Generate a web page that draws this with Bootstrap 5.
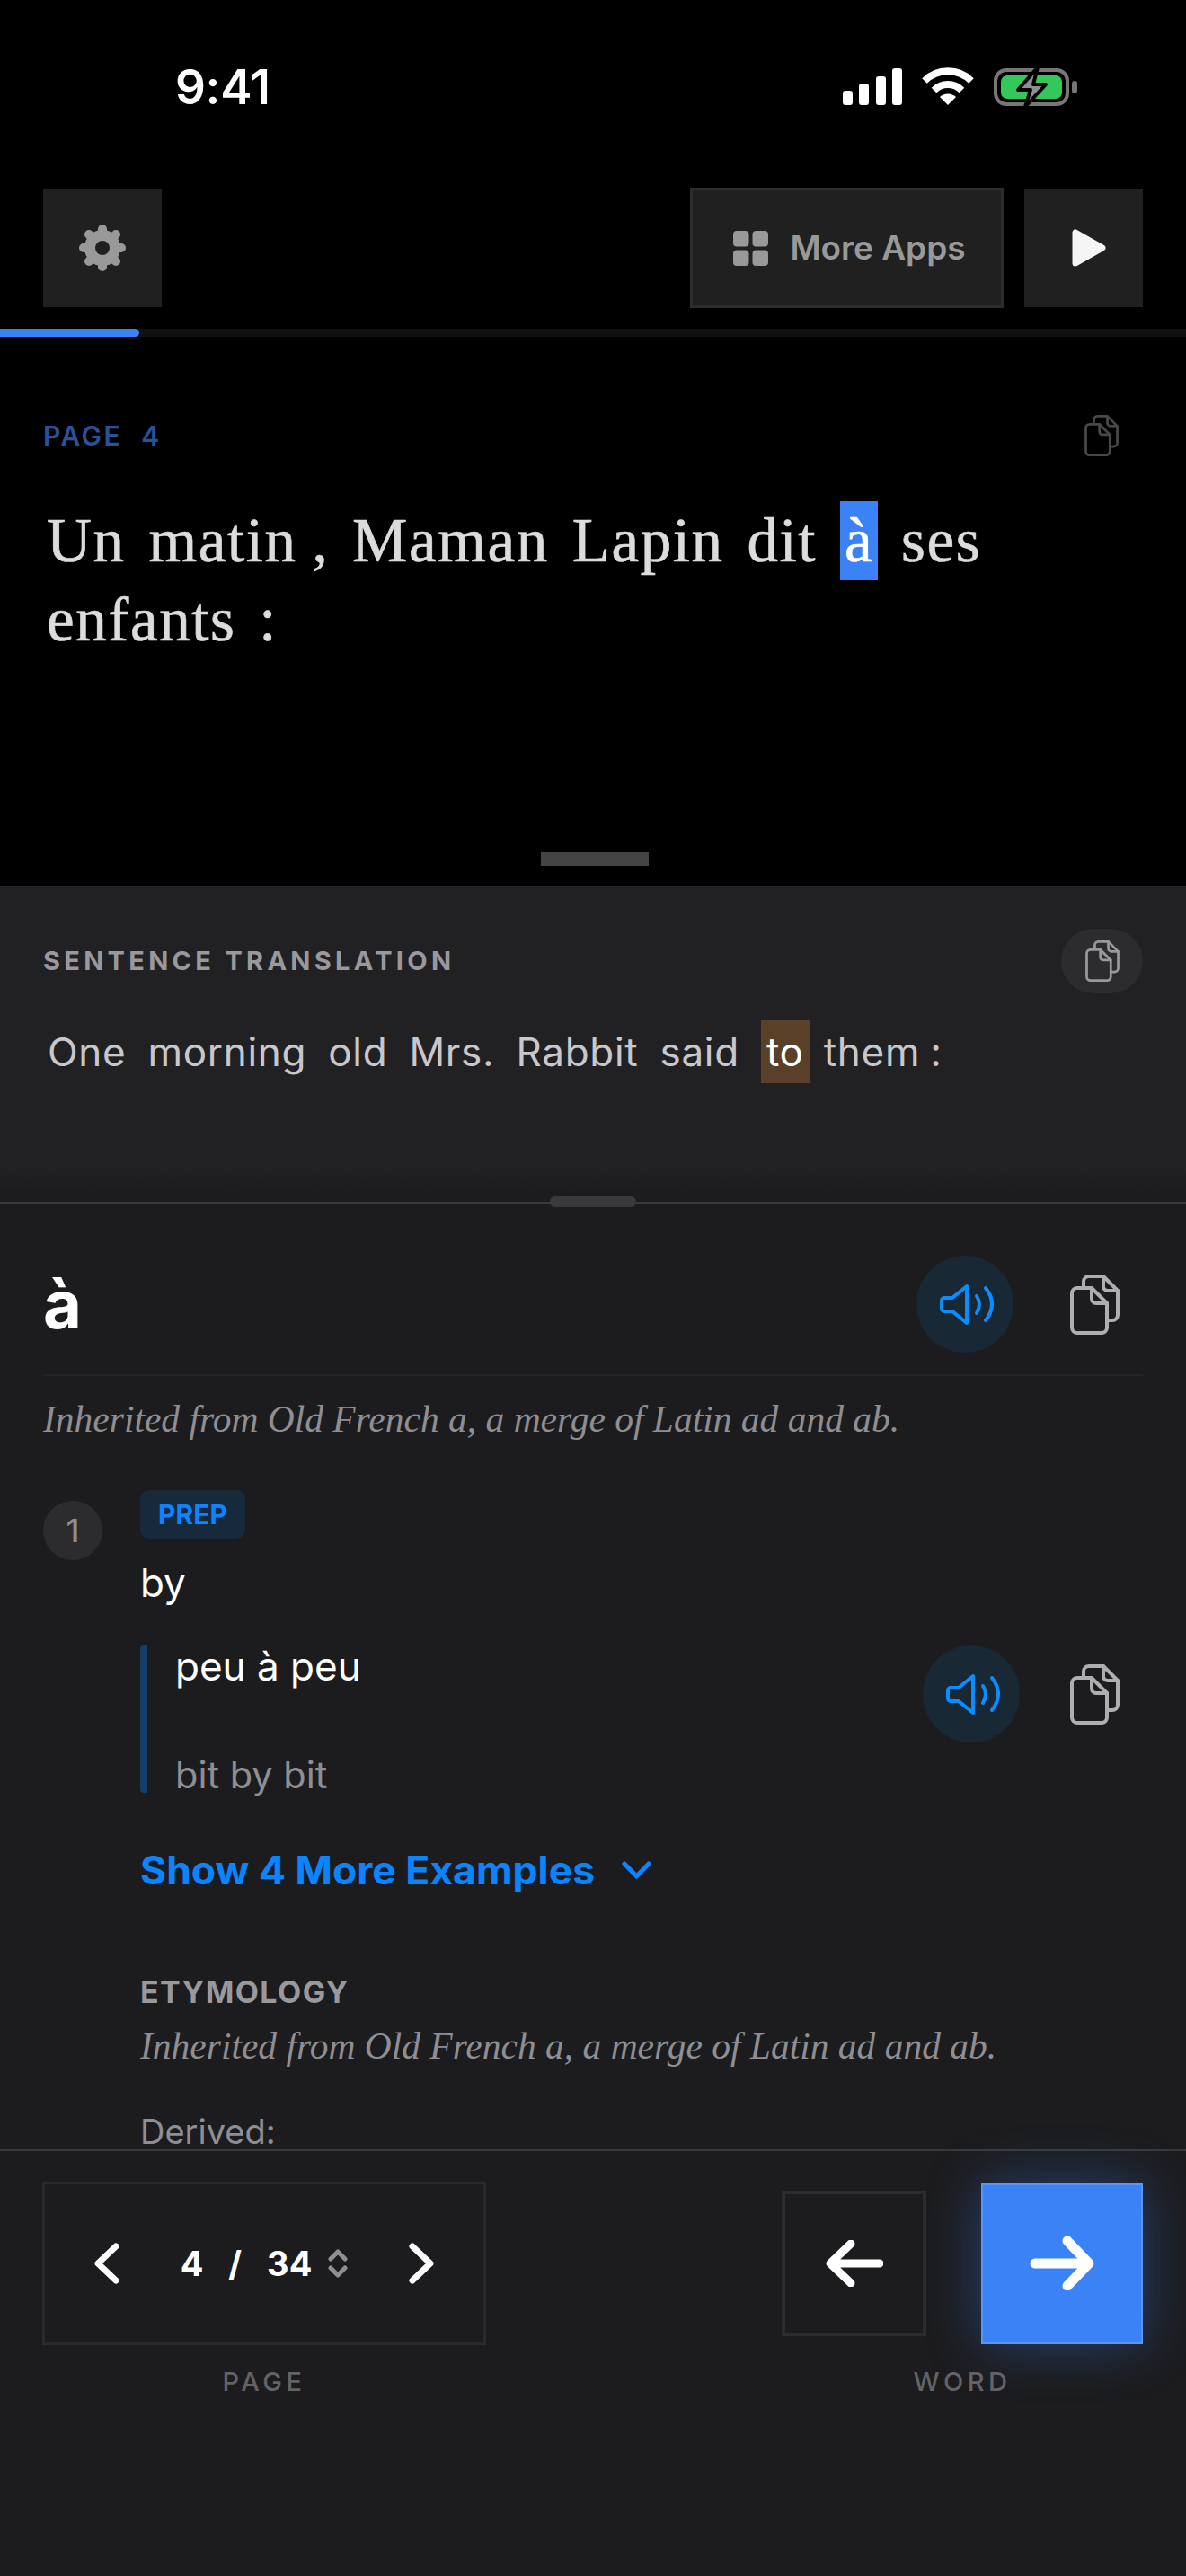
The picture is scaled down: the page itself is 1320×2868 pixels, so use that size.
<!DOCTYPE html>
<html lang="en">
<head>
<meta charset="utf-8">
<title>Reader</title>
<link href="https://cdn.jsdelivr.net/npm/bootstrap@5.3.0/dist/css/bootstrap.min.css" rel="stylesheet">
<style>
html,body{margin:0;background:#000}
body{font-family:Inter,"Liberation Sans",sans-serif;color:#fff}
.screen{width:1320px;height:2868px;overflow:hidden;background:#000}
.status-row{height:210px;padding:0 120px 0 195px}
.clock{font-size:53px;font-weight:600;line-height:64px;margin-top:65px;letter-spacing:-.3px}
.status-icons{margin-top:75px;gap:22px}
.tool-row{padding:0 48px;gap:23px;height:132px}
.tool-btn{border-radius:0;background:#202020;border:0;padding:0;height:132px;width:132px;color:#999}
.play-btn{padding-left:12px}
.apps-btn{width:349px;height:134px;margin-top:-1px;border:3px solid #2d2d2d;background:#202020;color:#999;font-size:37px;font-weight:600;gap:24px;border-radius:0;padding:0 0 0 6px}
.prog{height:9px;margin-top:24px;background:#111}
.prog-fill{width:155px;height:9px;background:#3b82f6;border-radius:0 5px 5px 0}
.reader{height:611px;padding:87px 48px 0 52px}
.page-tag{font-size:30px;font-weight:600;letter-spacing:2.5px;word-spacing:11px;color:#2a5298;margin-left:-4px}
.page-copy{margin-right:27px}
.read-text{font-family:"Liberation Serif",serif;font-size:69px;line-height:88px;letter-spacing:1.6px;color:#dcdcdc;-webkit-text-stroke:.7px #dcdcdc;word-spacing:7px;margin-top:50px;width:1100px}
.tight{word-spacing:-2px}
.word-on{display:inline-block;background:#3b82f6;color:#fff;-webkit-text-stroke:.7px #fff;padding:0 5px;height:88px}
.grab{width:120px;height:15px;background:#444;margin-top:auto;margin-bottom:22px}
.trans{height:352px;padding:46px 48px 0 48px;border-top:2px solid #29292b;background:linear-gradient(#212123 0,#212123 312px,#1c1c1e 340px)}
.sec-tag{font-size:29px;font-weight:700;letter-spacing:4.300px;color:#98989d}
.copy-pill{width:91px;height:72px;border-radius:36px;background:#2c2c2e;color:#98989d}
.trans-text{font-size:44px;line-height:70px;color:#c7c7cc;margin:30px 0 0 5px;letter-spacing:.7px;word-spacing:11px}
.word-alt{display:inline-block;background:#5a4028;color:#fff;padding:0 6px;height:70px;margin-right:-8px}
.split{height:2px;background:#3a3a3c;position:relative}
.split-grab{position:absolute;left:612px;top:-6px;width:96px;height:12px;border-radius:6px;background:#3a3a3c}
.dict{height:1053px;overflow:hidden;background:#1c1c1e;padding:58px 48px 0}
.head-row{padding-bottom:24px;border-bottom:2px solid #242426}
.head-word{font-size:74px;font-weight:700;line-height:108px}
.voice{width:108px;height:108px;border-radius:50%;background:#182835;flex:none}
.voice-ico{margin-left:3px}
.copy-slot{width:81px;flex:none;margin-left:63px;color:#aeaeb2}
.copy-big{margin-top:21px}
.it-line{font-family:"Liberation Serif",serif;font-style:italic;font-size:41.500px;line-height:56px;color:#8e8e93;white-space:nowrap}
.it-one{margin-top:20px}
.num{width:66px;height:66px;border-radius:50%;background:#2c2c2e;color:#8e8e93;font-size:36px;font-weight:500;margin-top:12px;flex:none}
.sense{margin-top:51px}
.sense-body{margin-left:42px;flex:1}
.pos{display:inline-flex;width:117px;height:54px;border-radius:10px;background:#172a3c;color:#0a84ff;font-size:30px;font-weight:700;align-items:center;justify-content:center;vertical-align:top}
.gloss{font-size:44px;line-height:60px;margin-top:19px}
.ex-row{margin-top:40px;height:164px}
.ex-main{border-left:8px solid #12406a;border-radius:4px;padding-left:31px;flex:1}
.ex-fr{font-size:44px;line-height:46px}
.ex-en{font-size:41.500px;line-height:44px;color:#8e8e93;margin-bottom:-2px}
.ex-row .copy-slot{margin-left:56px}
.more{font-size:44.500px;font-weight:700;line-height:60px;color:#0a84ff;margin-top:56px;gap:30px}
.ety{font-size:34px;font-weight:700;letter-spacing:1.400px;line-height:40px;color:#98989d;margin-top:86px}
.it-two{margin-top:12px}
.derived{font-size:38px;line-height:38px;color:#8e8e93;margin-top:48px}
.foot{height:475px;background:#1c1c1e;border-top:2px solid #3a3a3c;padding:34px 48px 0 47px}
.page-box{width:494px;height:182px;border:3px solid #2a2a2c;padding:0 55px}
.pnum{font-size:38px;font-weight:700;line-height:46px}
.slash{margin:0 28px}
.ud{margin-left:18px;color:#8e8e93}
.cap-tag{font-size:29px;font-weight:500;letter-spacing:4.500px;line-height:40px;color:#636366;margin-top:21px;text-align:center}
.word-nav{height:182px;gap:61px}
.prev-btn{width:161px;height:162px;border:4px solid #2c2c2e;background:transparent;border-radius:0;padding:0}
.next-btn{width:180px;height:179px;border:2px solid #5c95f8;background:#3b82f6;border-radius:0;padding:0;box-shadow:0 0 60px rgba(59,130,246,.38)}
</style>
</head>
<body>
<svg width="0" height="0" class="d-block" aria-hidden="true">
<symbol id="copy" viewBox="0 0 55 67"><g fill="none" stroke="currentColor" stroke-width="4" stroke-linejoin="round" stroke-linecap="round"><path d="M8 15H24L41 32V59a6 6 0 0 1-6 6H8a6 6 0 0 1-6-6V21a6 6 0 0 1 6-6Z"/><path d="M24 15V27a5 5 0 0 0 5 5H41"/><path d="M15 13V8a6 6 0 0 1 6-6H37L53 18V45a6 6 0 0 1-6 6H42"/><path d="M37 2V13a5 5 0 0 0 5 5H53"/></g></symbol>
<symbol id="voice" viewBox="0 0 60 47"><g fill="none" stroke="#0a8dff" stroke-width="4" stroke-linejoin="round" stroke-linecap="round"><path d="M30 3V44L14 31H5a3 3 0 0 1-3-3V19a3 3 0 0 1 3-3H14Z"/><path d="M41 14Q47 23 41 33"/><path d="M51 5Q65 23 51 41"/></g></symbol>
</svg>
<div class="screen d-flex flex-column">
  <div class="status-row d-flex justify-content-between align-items-start flex-none">
    <div class="clock">9:41</div>
    <div class="status-icons d-flex align-items-start">
      <svg width="66" height="42" viewBox="0 0 66 42" fill="#fff"><rect x="0" y="26" width="11" height="16" rx="3"/><rect x="18" y="18" width="11" height="24" rx="3"/><rect x="37" y="10" width="11" height="32" rx="3"/><rect x="55" y="1" width="11" height="41" rx="3"/></svg>
      <svg width="58" height="42" viewBox="0 0 58 42"><g fill="none" stroke="#fff" stroke-width="8"><path d="M3 15A37 37 0 0 1 55 15"/><path d="M13.500 25.500A22 22 0 0 1 44.500 25.500"/></g><path d="M29 42L20 33A13 13 0 0 1 38 33Z" fill="#fff"/></svg>
      <svg width="94" height="50" viewBox="0 0 94 50"><rect x="2" y="3" width="80" height="38" rx="12" fill="none" stroke="#777" stroke-width="4"/><rect x="8" y="9" width="68" height="26" rx="7" fill="#34c759"/><rect x="87" y="15" width="6" height="14" rx="3" fill="#777"/><path d="M49 0L27 25H41L35 44L58 19H44Z" fill="#8e8e8e" stroke="#000" stroke-width="4" stroke-linejoin="round"/></svg>
    </div>
  </div>
  <div class="tool-row d-flex align-items-start">
    <button class="btn tool-btn d-flex align-items-center justify-content-center" aria-label="Settings">
      <svg width="54" height="54" viewBox="-27 -27 54 54"><g stroke="#999" stroke-width="10" stroke-linecap="round"><path d="M0-15V-21M0 15V21M-15 0H-21M15 0H21M10.600-10.600L15-15M-10.600-10.600L-15-15M10.600 10.600L15 15M-10.600 10.600L-15 15"/></g><circle r="14" fill="none" stroke="#999" stroke-width="12"/></svg>
    </button>
    <button class="btn apps-btn d-flex align-items-center justify-content-center ms-auto">
      <svg width="39" height="39" viewBox="0 0 39 39" fill="#999"><rect width="17.500" height="17.500" rx="4"/><rect x="21.500" width="17.500" height="17.500" rx="4"/><rect y="21.500" width="17.500" height="17.500" rx="4"/><rect x="21.500" y="21.500" width="17.500" height="17.500" rx="4"/></svg>
      <span>More Apps</span>
    </button>
    <button class="btn tool-btn play-btn d-flex align-items-center justify-content-center" aria-label="Play">
      <svg width="38" height="42" viewBox="0 0 38 42"><path d="M4 4V38L34 21Z" fill="#f5f5f5" stroke="#f5f5f5" stroke-width="7" stroke-linejoin="round"/></svg>
    </button>
  </div>
  <div class="prog"><div class="prog-fill"></div></div>
  <section class="reader d-flex flex-column">
    <div class="d-flex justify-content-between align-items-center">
      <span class="page-tag">PAGE 4</span>
      <svg width="38" height="46" class="page-copy" color="#48484a"><use href="#copy"/></svg>
    </div>
    <div class="read-text">Un matin<span class="tight"> ,</span> Maman Lapin dit <span class="word-on">à</span> ses enfants :</div>
    <div class="grab align-self-center"></div>
  </section>
  <section class="trans">
    <div class="d-flex justify-content-between align-items-center">
      <span class="sec-tag">SENTENCE TRANSLATION</span>
      <div class="copy-pill d-flex align-items-center justify-content-center"><svg width="38" height="46"><use href="#copy"/></svg></div>
    </div>
    <div class="trans-text">One morning old Mrs. Rabbit said <span class="word-alt">to</span> them<span class="tight"> :</span></div>
  </section>
  <div class="split"><div class="split-grab"></div></div>
  <section class="dict">
    <div class="head-row d-flex align-items-start">
      <div class="head-word flex-grow-1">à</div>
      <div class="voice d-flex align-items-center justify-content-center"><svg width="60" height="47" class="voice-ico"><use href="#voice"/></svg></div>
      <div class="copy-slot d-flex"><svg width="55" height="67" class="copy-big"><use href="#copy"/></svg></div>
    </div>
    <div class="it-line it-one">Inherited from Old French a, a merge of Latin ad and ab.</div>
    <div class="sense d-flex">
      <div class="num d-flex align-items-center justify-content-center">1</div>
      <div class="sense-body">
        <div class="d-flex"><div class="pos">PREP</div></div>
        <div class="gloss">by</div>
        <div class="ex-row d-flex align-items-start">
          <div class="ex-main h-100 d-flex flex-column justify-content-between">
            <div class="ex-fr">peu à peu</div>
            <div class="ex-en">bit by bit</div>
          </div>
          <div class="voice d-flex align-items-center justify-content-center"><svg width="60" height="47" class="voice-ico"><use href="#voice"/></svg></div>
          <div class="copy-slot d-flex"><svg width="55" height="67" class="copy-big"><use href="#copy"/></svg></div>
        </div>
        <div class="more d-flex align-items-center">Show 4 More Examples
          <svg width="33" height="20" viewBox="0 0 33 20"><path d="M3 3L16.500 17L30 3" fill="none" stroke="#0a84ff" stroke-width="5" stroke-linecap="round" stroke-linejoin="round"/></svg>
        </div>
        <div class="ety">ETYMOLOGY</div>
        <div class="it-line it-two">Inherited from Old French a, a merge of Latin ad and ab.</div>
        <div class="derived">Derived:</div>
      </div>
    </div>
  </section>
  <footer class="foot d-flex justify-content-between align-items-start">
    <div>
      <div class="page-box d-flex align-items-center justify-content-between">
        <svg width="28" height="46" viewBox="0 0 28 46"><path d="M24 4L4 23L24 42" fill="none" stroke="#fff" stroke-width="7" stroke-linecap="round" stroke-linejoin="round"/></svg>
        <div class="pnum d-flex align-items-center"><span>4</span><span class="slash">/</span><span>34</span>
          <svg class="ud" width="22" height="32" viewBox="0 0 22 32"><path d="M3 11L11 3L19 11M3 21L11 29L19 21" fill="none" stroke="currentColor" stroke-width="5" stroke-linecap="round" stroke-linejoin="round"/></svg>
        </div>
        <svg width="28" height="46" viewBox="0 0 28 46"><path d="M4 4L24 23L4 42" fill="none" stroke="#fff" stroke-width="7" stroke-linecap="round" stroke-linejoin="round"/></svg>
      </div>
      <div class="cap-tag">PAGE</div>
    </div>
    <div>
      <div class="word-nav d-flex align-items-center">
        <button class="btn prev-btn d-flex align-items-center justify-content-center" aria-label="Previous word"><svg width="64" height="52" viewBox="0 0 64 52"><path d="M60 26H6M28 4L5 26L28 48" fill="none" stroke="#fff" stroke-width="9" stroke-linecap="round" stroke-linejoin="round"/></svg></button>
        <button class="btn next-btn d-flex align-items-center justify-content-center" aria-label="Next word"><svg width="72" height="60" viewBox="0 0 72 60"><path d="M6 30H65M42 5L66 30L42 55" fill="none" stroke="#fff" stroke-width="11" stroke-linecap="round" stroke-linejoin="round"/></svg></button>
      </div>
      <div class="cap-tag">WORD</div>
    </div>
  </footer>
</div>
<script src="https://cdn.jsdelivr.net/npm/bootstrap@5.3.0/dist/js/bootstrap.bundle.min.js"></script>
</body>
</html>
